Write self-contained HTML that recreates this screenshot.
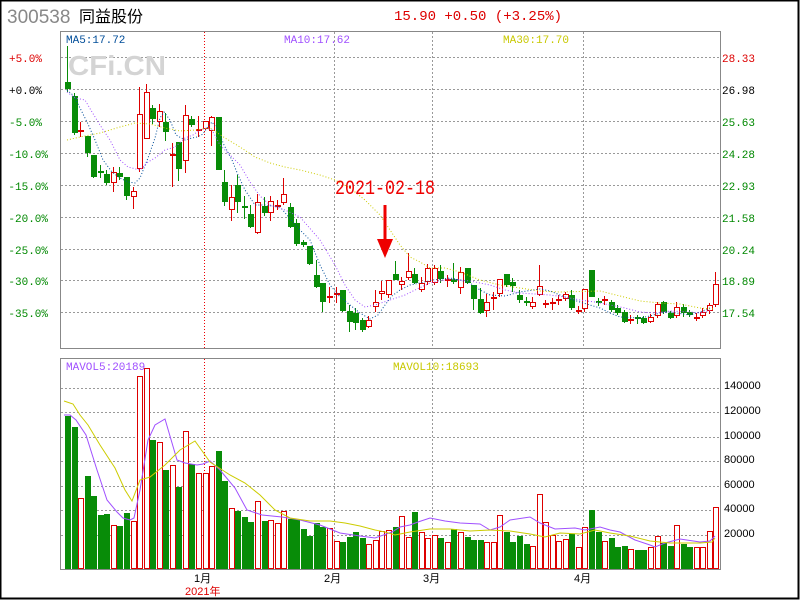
<!DOCTYPE html>
<html><head><meta charset="utf-8">
<style>
html,body{margin:0;padding:0;background:#fff;}
body{width:800px;height:600px;overflow:hidden;position:relative;}
svg{position:absolute;left:0;top:0;}
</style></head>
<body>
<svg id="s" width="800" height="600" xmlns="http://www.w3.org/2000/svg" font-family="Liberation Mono, monospace">
<rect x="0.5" y="0.5" width="798" height="598" fill="#fff" stroke="#000" stroke-width="2"/>
<text x="7" y="23" font-family="Liberation Sans, sans-serif" font-size="19" fill="#888">300538</text>
<text x="79" y="22" font-family="Liberation Sans, 'Noto Sans CJK SC', sans-serif" font-size="16" fill="#000">同益股份</text>
<text x="394" y="20" font-size="14" fill="#d00">15.90 +0.50 (+3.25%)</text>
<g stroke="#999" stroke-dasharray="2,2" stroke-width="1">
<line x1="61" y1="57.5" x2="720" y2="57.5"/><line x1="61" y1="89.5" x2="720" y2="89.5"/>
<line x1="61" y1="121.5" x2="720" y2="121.5"/><line x1="61" y1="153.5" x2="720" y2="153.5"/>
<line x1="61" y1="185.5" x2="720" y2="185.5"/><line x1="61" y1="217.5" x2="720" y2="217.5"/>
<line x1="61" y1="249.5" x2="720" y2="249.5"/><line x1="61" y1="280.5" x2="720" y2="280.5"/>
<line x1="61" y1="312.5" x2="720" y2="312.5"/>
<line x1="334.5" y1="32" x2="334.5" y2="348"/><line x1="432.5" y1="32" x2="432.5" y2="348"/><line x1="583.5" y1="32" x2="583.5" y2="348"/>
<line x1="61" y1="388.5" x2="720" y2="388.5"/><line x1="61" y1="412.5" x2="720" y2="412.5"/>
<line x1="61" y1="437.5" x2="720" y2="437.5"/><line x1="61" y1="461.5" x2="720" y2="461.5"/>
<line x1="61" y1="486.5" x2="720" y2="486.5"/><line x1="61" y1="510.5" x2="720" y2="510.5"/>
<line x1="61" y1="535.5" x2="720" y2="535.5"/>
<line x1="334.5" y1="359" x2="334.5" y2="569"/><line x1="432.5" y1="359" x2="432.5" y2="569"/><line x1="583.5" y1="359" x2="583.5" y2="569"/>
</g>
<g stroke="#e00" stroke-dasharray="1,2"><line x1="204.5" y1="32" x2="204.5" y2="348"/><line x1="204.5" y1="359" x2="204.5" y2="569"/></g>
<text x="68" y="75" font-family="Liberation Sans, sans-serif" font-weight="bold" font-size="28" fill="#d4d4d4" textLength="98" lengthAdjust="spacingAndGlyphs">CFi.CN</text>
<g id="cand"></g>
<polyline fill="none" stroke="#004d99" stroke-dasharray="1,2" points="67,90 74,96 80,108 88,124 95,140 103,160 112,172 120,178 128,182 135,183 140,178 148,158 155,138 160,118 164,112 170,120 176,135 185,140 192,138 197,137 203,134 207,128 212,122 218,130 224,145 232,160 238,175 245,190 255,205 265,205 280,207 300,230 310,240 320,265 330,285 340,297 350,305 360,313 370,319 378,315 385,305 392,296 400,290 410,285 420,283 433,280 450,278 460,280 470,283 480,290 490,295 505,296 520,292 540,289 550,291 560,295 570,299 580,302 590,305 600,308 610,313 620,317 640,318 650,316 660,313 670,312 690,315 700,312 710,308"/>
<polyline fill="none" stroke="#a050ff" stroke-dasharray="1,2" points="67,92 75,98 85,100 92,112 100,125 110,140 120,160 128,167 140,170 148,162 155,158 165,150 175,147 185,138 193,135 200,130 206,128 212,130 220,145 230,155 240,165 250,182 260,196 270,205 285,210 300,217 320,240 335,265 345,285 355,300 365,307 375,305 390,300 405,295 415,290 430,283 450,279 470,281 490,285 505,290 520,293 550,295 565,297 580,300 595,302 610,305 625,308 640,312 655,313 670,311 690,312 700,313 712,310"/>
<polyline fill="none" stroke="#cccc00" stroke-dasharray="1,2" points="67,140 80,137 100,133 120,127 135,123 150,124 165,128 180,131 195,130 210,128 225,138 240,147 255,157 270,163 285,167 300,170 320,175 335,180 350,188 365,200 380,215 390,230 400,245 410,257 420,262 430,268 445,268 460,272 480,280 500,285 520,288 540,291 560,292 600,291 620,296 640,301 660,303 680,304 700,308 713,309"/>
<polyline fill="none" stroke="#a050ff" points="64,415 70,415 76,420 86,435 97,470 107,500 117,512 123,518 130,520 134,518 140,490 148,440 155,425 165,419 177,460 185,463 197,465 203,464 210,461 220,470 235,488 247,510 262,515 282,517 300,520 320,525 340,533 360,536 375,538 392,532 400,527 410,525 418,522 430,518 445,521 460,523 480,524 490,530 500,527 510,520 530,517 540,523 555,529 575,528 585,530 600,527 610,530 620,532 635,540 650,545 655,547 665,543 680,539 700,542 710,541 715,536"/>
<polyline fill="none" stroke="#cccc00" points="64,401 73,404 80,415 88,425 100,445 115,468 125,490 132,501 140,480 150,477 165,465 180,450 195,441 210,462 230,475 245,483 260,495 275,510 290,518 310,521 330,521 345,523 360,526 375,530 385,532 395,535 410,532 430,529 450,529 470,531 490,530 510,531 530,534 545,537 560,533 580,534 595,530 610,533 630,536 650,541 670,543 700,543 712,542 715,538"/>
<rect x="60.5" y="31.5" width="660" height="317" fill="none" stroke="#888"/>
<rect x="60.5" y="358.5" width="660" height="211" fill="none" stroke="#888"/>
<text x="66" y="43" font-size="11" fill="#004d99">MA5:17.72</text>
<text x="284" y="43" font-size="11" fill="#a050ff">MA10:17.62</text>
<text x="503" y="43" font-size="11" fill="#c8c800">MA30:17.70</text>
<text x="66" y="370" font-size="11" fill="#a050ff">MAVOL5:20189</text>
<text x="393" y="370" font-size="11" fill="#c8c800">MAVOL10:18693</text>
<g font-size="11" text-anchor="end">
<text x="42" y="62" fill="#d00">+5.0%</text>
<text x="42" y="94" fill="#000">+0.0%</text>
<text x="42" y="126" fill="#080">-5.0%</text>
<text x="48" y="158" fill="#080">-10.0%</text>
<text x="48" y="190" fill="#080">-15.0%</text>
<text x="48" y="222" fill="#080">-20.0%</text>
<text x="48" y="254" fill="#080">-25.0%</text>
<text x="48" y="285" fill="#080">-30.0%</text>
<text x="48" y="317" fill="#080">-35.0%</text>
</g>
<g font-size="11">
<text x="722" y="62" fill="#d00">28.33</text>
<text x="722" y="94" fill="#000">26.98</text>
<text x="722" y="126" fill="#080">25.63</text>
<text x="722" y="158" fill="#080">24.28</text>
<text x="722" y="190" fill="#080">22.93</text>
<text x="722" y="222" fill="#080">21.58</text>
<text x="722" y="254" fill="#080">20.24</text>
<text x="722" y="285" fill="#080">18.89</text>
<text x="722" y="317" fill="#080">17.54</text>
</g>
<g font-family="Liberation Sans, sans-serif" font-size="11" fill="#000">
<text x="724" y="389">140000</text><text x="724" y="414">120000</text><text x="724" y="439">100000</text>
<text x="724" y="463">80000</text><text x="724" y="488">60000</text><text x="724" y="512">40000</text><text x="724" y="537">20000</text>
</g>
<g font-family="Liberation Sans, 'Noto Sans CJK SC', sans-serif" font-size="11">
<text x="194" y="582" fill="#000">1月</text>
<text x="324" y="582" fill="#000">2月</text>
<text x="423" y="582" fill="#000">3月</text>
<text x="574" y="582" fill="#000">4月</text>
<text x="185" y="595" fill="#d00">2021年</text>
</g>
<text x="335" y="194" font-size="20" fill="#e00" textLength="100" lengthAdjust="spacingAndGlyphs">2021-02-18</text>
<rect x="383.5" y="205" width="3" height="34" fill="#e00"/>
<polygon points="377,239 393,239 385,258" fill="#e00"/>
</svg>
<script>
var D=[[82,89,46,92,'g'],[96,133,93,135,'g'],[130,132,122,137,'r'],[136,153,136,157,'g'],[155,177,155,178,'g'],[171,173,165,178,'g'],[174,183,170,185,'g'],[172,183,167,192,'r'],[173,177,167,180,'g'],[177,196,177,200,'g'],
[191,197,187,209,'r'],[114,169,87,172,'r'],[92,139,84,139,'r'],[108,119,105,124,'g'],[111,122,104,127,'r'],[122,132,113,141,'g'],[154,156,143,187,'r'],[142,169,142,181,'g'],[115,161,105,173,'r'],[119,125,116,127,'g'],
[129,131,116,137,'r'],[121,129,121,130,'r'],[117,131,116,146,'r'],[117,170,117,170,'g'],[182,202,170,206,'g'],[197,210,185,221,'r'],[185,202,175,213,'g'],[206,208,196,219,'g'],[214,227,205,228,'g'],[202,233,194,234,'r'],
[206,213,197,216,'g'],[201,213,196,221,'r'],[205,207,200,210,'r'],[194,203,178,205,'r'],[207,227,203,228,'g'],[223,244,219,246,'g'],[242,245,240,247,'g'],[246,264,246,265,'g'],[275,287,260,288,'g'],[283,302,283,312,'g'],
[296,298,287,303,'r'],[293,295,287,303,'r'],[290,311,290,312,'g'],[311,322,305,332,'g'],[313,323,308,330,'g'],[320,330,318,332,'g'],[320,327,316,328,'r'],[302,307,290,312,'r'],[291,294,281,300,'r'],[280,295,280,298,'r'],
[274,280,261,280,'g'],[281,285,277,290,'r'],[271,278,253,280,'r'],[274,283,268,284,'g'],[283,290,277,292,'r'],[268,282,264,285,'r'],[268,283,265,285,'r'],[271,279,265,283,'g'],[279,281,275,287,'r'],[279,282,263,284,'g'],
[272,288,267,294,'r'],[268,283,268,284,'g'],[285,299,285,310,'g'],[299,313,288,314,'g'],[302,311,294,317,'r'],[297,299,292,310,'r'],[279,294,279,297,'r'],[274,285,274,287,'g'],[282,286,278,292,'g'],[295,300,290,303,'g'],
[301,303,297,306,'g'],[302,307,297,309,'r'],[286,295,265,296,'r'],[303,305,300,308,'r'],[302,304,298,310,'r'],[299,301,295,305,'r'],[294,299,292,301,'r'],[295,308,290,310,'g'],[310,312,306,314,'r'],[289,309,289,312,'r'],
[270,297,270,297,'g'],[301,303,298,306,'g'],[299,301,296,305,'r'],[302,310,300,312,'g'],[308,313,305,315,'g'],[312,322,310,323,'g'],[319,321,315,324,'r'],[317,319,315,324,'g'],[318,323,316,324,'g'],[317,322,314,323,'r'],
[304,316,302,318,'r'],[302,312,301,314,'g'],[313,318,311,319,'g'],[307,316,302,318,'r'],[307,313,304,317,'g'],[312,315,310,317,'g'],[317,319,313,321,'r'],[312,316,308,318,'r'],[305,311,303,314,'r'],[284,305,272,307,'r']];
var V=[416,427,498,476,496,515,514,525,526,513,521,376,368,440,442,470,465,487,431,464,473,473,466,451,481,508,511,517,522,501,521,520,523,511,519,519,529,536,523,527,528,541,542,537,532,538,544,540,531,530,527,516,537,512,532,538,535,538,542,529,532,537,540,540,542,542,515,532,542,536,544,546,494,522,535,541,539,534,547,527,510,532,541,538,547,546,549,550,550,547,536,543,546,525,544,547,547,547,531,507];
var h='';
for(var i=0;i<D.length;i++){
 var d=D[i],x=Math.round(67+6.55*i),c=d[4]=='g'?'#088c08':'#d00';
 h+='<line x1="'+(x+0.5)+'" x2="'+(x+0.5)+'" y1="'+d[2]+'" y2="'+d[3]+'" stroke="'+c+'"/>';
 var hh=Math.max(d[1]-d[0],1);
 if(d[4]=='g') h+='<rect x="'+(x-2)+'" y="'+d[0]+'" width="6" height="'+hh+'" fill="'+c+'"/>';
 else h+='<rect x="'+(x-1.5)+'" y="'+(d[0]+0.5)+'" width="5" height="'+Math.max(hh-1,1)+'" fill="#fff" stroke="'+c+'"/>';
 var vt=V[i];
 if(d[4]=='g') h+='<rect x="'+(x-2)+'" y="'+vt+'" width="6" height="'+(569-vt)+'" fill="'+c+'"/>';
 else h+='<rect x="'+(x-1.5)+'" y="'+(vt+0.5)+'" width="5" height="'+(568-vt)+'" fill="#fff" stroke="'+c+'"/>';
}
document.getElementById('cand').innerHTML=h;
</script>
</body></html>
